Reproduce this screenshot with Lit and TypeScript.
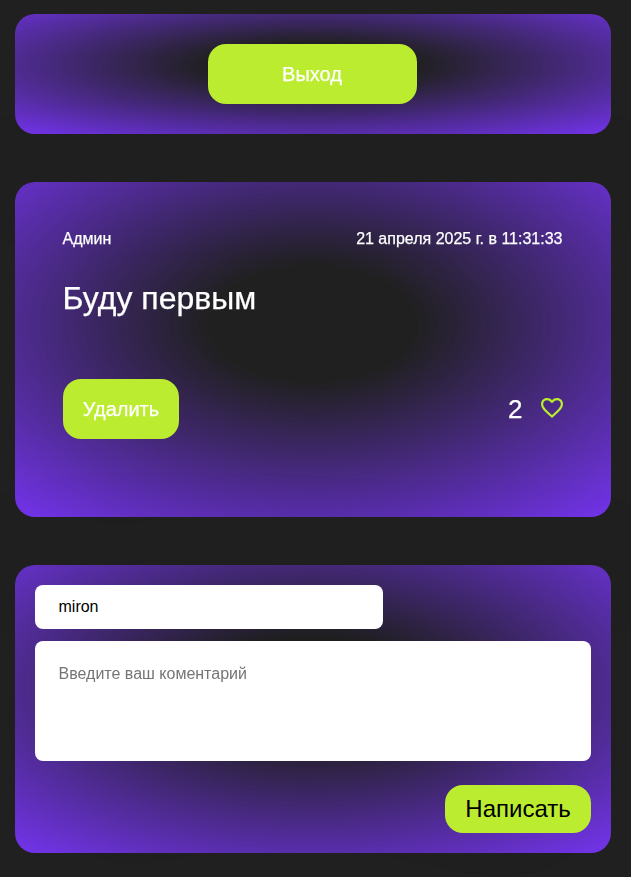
import { LitElement, html, css } from "lit";
import { customElement, state } from "lit/decorators.js";

interface Comment {
  author: string;
  date: string;
  text: string;
  likes: number;
}

@customElement("app-root")
export class AppRoot extends LitElement {
  static styles = css`
    :host {
      display: flex;
      flex-direction: column;
      align-items: flex-start;
      gap: 48px;
      box-sizing: border-box;
      height: 877px;
      padding: 14px 15px 24px;
      overflow: hidden;
      background: #212121;
      color: #ffffff;
      font-family: "Liberation Sans", Arial, Helvetica, sans-serif;
      font-size: 16px;
    }
    .card {
      box-sizing: border-box;
      width: 596px;
      border-radius: 20px;
      background: radial-gradient(
        75.42% 75.42% at 50% 42.37%,
        rgba(53, 53, 53, 0) 22.92%,
        #7334ea 100%
      );
      filter: drop-shadow(0 20px 67px rgba(0, 0, 0, 0.08));
    }
    .exit {
      display: flex;
      justify-content: center;
      height: 120px;
      padding: 30px 2px 30px 0;
    }
    .comment {
      height: 335px;
      padding: 48px;
      -webkit-text-stroke: 0.25px #ffffff;
    }
    .head {
      display: flex;
      justify-content: space-between;
      margin: 0 0.5px 0 -0.5px;
      line-height: 18px;
    }
    .text {
      margin: 32px 0 0 -0.5px;
      font-size: 32px;
      line-height: 37px;
    }
    .foot {
      display: flex;
      justify-content: space-between;
      align-items: center;
      margin-top: 62px;
    }
    .likes {
      display: flex;
      align-items: center;
      gap: 18.5px;
      font-size: 26px;
      line-height: 30px;
    }
    .heart {
      display: block;
      width: 22px;
      height: 20px;
      margin-bottom: 2px;
      fill: #bcec30;
    }
    button {
      border: none;
      margin: 0;
      padding: 0;
      background: #bcec30;
      border-radius: 18px;
      font-family: inherit;
      color: #ffffff;
    }
    .leave,
    .remove {
      height: 60px;
      font-size: 20px;
      -webkit-text-stroke: 0.25px #ffffff;
    }
    .leave {
      width: 209px;
    }
    .remove {
      width: 116px;
    }
    .form {
      display: flex;
      flex-direction: column;
      height: 288px;
      padding: 20px;
    }
    input,
    textarea {
      display: block;
      box-sizing: border-box;
      margin: 0;
      border: none;
      outline: none;
      border-radius: 8px;
      background: #ffffff;
      color: #000000;
      font-family: inherit;
      font-size: 16px;
    }
    input {
      width: 348px;
      height: 44px;
      padding: 0 23.5px;
    }
    textarea {
      width: 100%;
      height: 120px;
      margin-top: 12px;
      padding: 24px 23.5px;
      resize: none;
    }
    ::placeholder {
      color: #757575;
    }
    .send {
      align-self: flex-end;
      width: 146px;
      height: 48px;
      margin-top: 24px;
      font-size: 24px;
      color: #000000;
    }
  `;

  @state() private comments: Comment[] = [
    {
      author: "Админ",
      date: "21 апреля 2025 г. в 11:31:33",
      text: "Буду первым",
      likes: 2,
    },
  ];

  private renderComment(comment: Comment) {
    return html`
      <article class="card comment">
        <div class="head">
          <span>${comment.author}</span>
          <span>${comment.date}</span>
        </div>
        <div class="text">${comment.text}</div>
        <div class="foot">
          <button class="remove">Удалить</button>
          <div class="likes">
            <span>${comment.likes}</span>
            <svg class="heart" viewBox="0 0 22 20">
              <path
                d="M11.11 16.9482L11 17.0572L10.879 16.9482C5.654 12.2507 2.2 9.14441 2.2 5.99455C2.2 3.81471 3.85 2.17984 6.05 2.17984C7.744 2.17984 9.394 3.26975 9.977 4.75204H12.023C12.606 3.26975 14.256 2.17984 15.95 2.17984C18.15 2.17984 19.8 3.81471 19.8 5.99455C19.8 9.14441 16.346 12.2507 11.11 16.9482ZM15.95 0C14.036 0 12.199 0.882834 11 2.26703C9.801 0.882834 7.964 0 6.05 0C2.662 0 0 2.6267 0 5.99455C0 10.1035 3.74 13.4714 9.405 18.5613L11 20L12.595 18.5613C18.26 13.4714 22 10.1035 22 5.99455C22 2.6267 19.338 0 15.95 0Z"
              />
            </svg>
          </div>
        </div>
      </article>
    `;
  }

  render() {
    return html`
      <div class="card exit"><button class="leave">Выход</button></div>
      ${this.comments.map((comment) => this.renderComment(comment))}
      <div class="card form">
        <input type="text" .value=${"miron"} />
        <textarea placeholder="Введите ваш коментарий"></textarea>
        <button class="send">Написать</button>
      </div>
    `;
  }
}
